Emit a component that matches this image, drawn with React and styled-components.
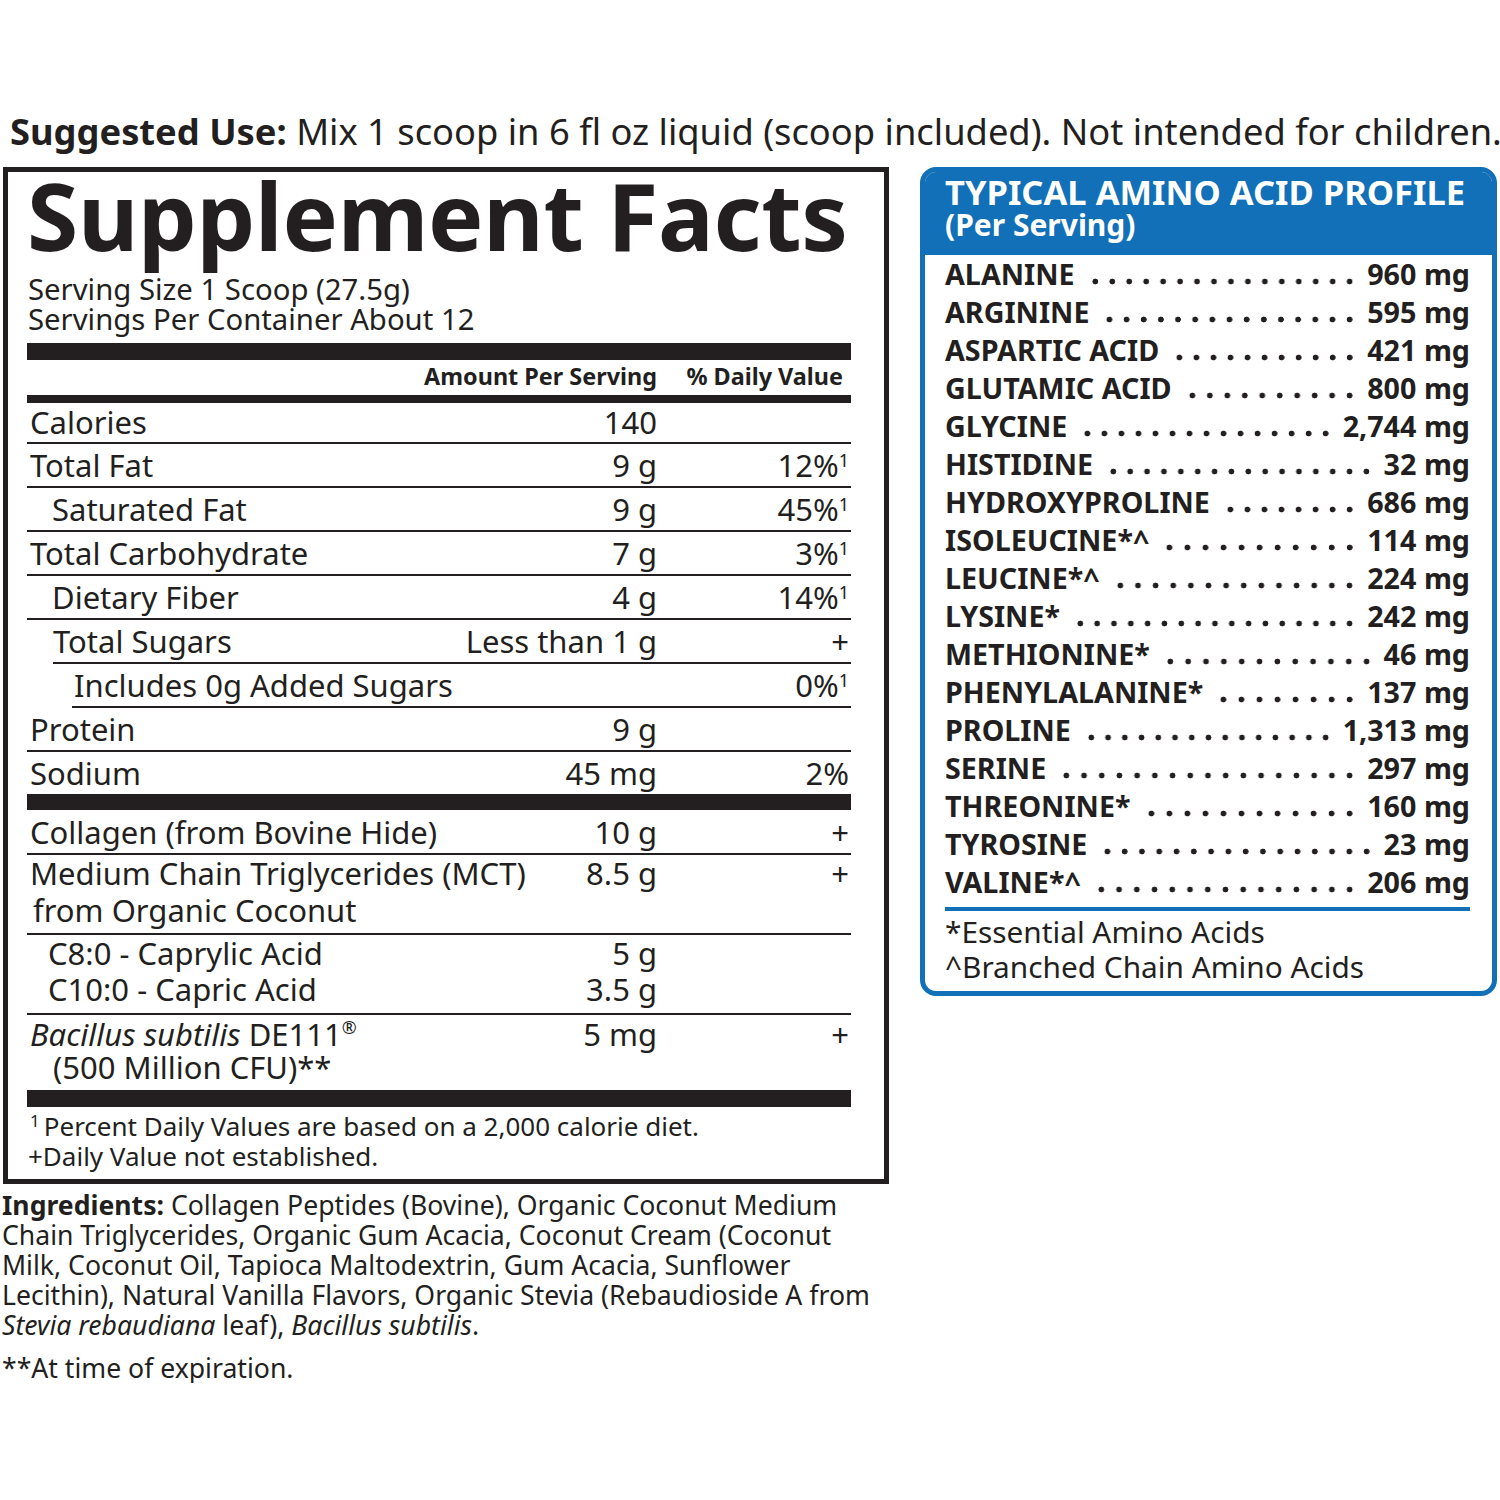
import React from "react";
import styled, { createGlobalStyle } from "styled-components";

const ink = "#231f20";
const blue = "#1170b8";

const GlobalStyle = createGlobalStyle`
  html, body { margin: 0; padding: 0; background: #fff; }
  body {
    color: ${ink};
    font-family: "Noto Sans", "Open Sans", sans-serif;
  }
`;

const Page = styled.div`
  width: 1500px;
  padding-top: 108px;
`;

const Suggested = styled.div`
  padding-left: 10px;
  font-size: 36.3px;
  line-height: 46px;
  white-space: nowrap;
  b { font-weight: 700; }
`;

const Columns = styled.div`
  display: flex;
  align-items: flex-start;
  gap: 31px;
  margin-top: 13px;
  padding-left: 3px;
`;

const LeftCol = styled.div`
  width: 886px;
  display: flex;
  flex-direction: column;
`;

const FactsBox = styled.section`
  box-sizing: border-box;
  width: 886px;
  border: 5px solid ${ink};
  padding: 3px 33px 8px 19px;
`;

const Title = styled.h1`
  margin: 0;
  font-size: 93px;
  font-weight: 700;
  line-height: 80px;
  white-space: nowrap;
  letter-spacing: -0.3px;
`;

const Serving = styled.div`
  margin-top: 19px;
  font-size: 29.3px;
  line-height: 30px;
  padding-left: 1px;
  white-space: nowrap;
`;

const Bar = styled.div`
  height: ${(p) => p.$h}px;
  margin-top: ${(p) => p.$mt || 0}px;
  background: ${ink};
`;

const HeaderRow = styled.div`
  display: flex;
  font-size: 23.4px;
  font-weight: 700;
  line-height: 33px;
  padding-bottom: 2px;
  white-space: nowrap;
`;

const Row = styled.div`
  display: flex;
  align-items: flex-start;
  margin-left: ${(p) => p.$inset || 0}px;
  padding-top: ${(p) => p.$pt || 0}px;
  padding-bottom: ${(p) => p.$pb || 0}px;
  border-bottom: ${(p) => (p.$line ? `2px solid ${ink}` : "none")};
  font-size: 31px;
  line-height: ${(p) => p.$lh || 42}px;
  white-space: nowrap;
`;

const RowGroup = styled.div`
  padding-bottom: 6px;
  border-bottom: 2px solid ${ink};
`;

const Name = styled.div`
  flex: 1;
  padding-left: ${(p) => p.$indent ?? 3}px;
`;

const Cont = styled.span`
  display: block;
  padding-left: ${(p) => p.$indent || 0}px;
`;

const Amount = styled.div`
  text-align: right;
`;

const DV = styled.div`
  width: 194px;
  flex: none;
  text-align: right;
  padding-right: ${(p) => p.$pr ?? 2}px;
  box-sizing: border-box;
`;

const Sup = styled.sup`
  font-size: ${(p) => p.$size || 18}px;
  line-height: 0;
  vertical-align: ${(p) => p.$raise || 10}px;
  margin-left: ${(p) => p.$ml || 0}px;
  margin-right: ${(p) => p.$mr || 0}px;
`;

const Footnotes = styled.div`
  padding-top: 4px;
  font-size: 26px;
  line-height: 30px;
  white-space: nowrap;
`;

const FootLine = styled.div`
  padding-left: ${(p) => p.$indent || 1}px;
`;

const Ingredients = styled.p`
  margin: 6px 0 0 -1px;
  font-size: 26.6px;
  line-height: 30px;
  white-space: nowrap;
  b { font-weight: 700; }
`;

const Expiration = styled.p`
  margin: 13px 0 0 -1px;
  font-size: 26.6px;
  line-height: 30px;
`;

const AminoBox = styled.section`
  box-sizing: border-box;
  width: 577px;
  border: 5px solid ${blue};
  border-radius: 16px;
  overflow: hidden;
  background: #fff;
`;

const AminoHeader = styled.header`
  background: ${blue};
  color: #fff;
  padding: 2px 10px 15px 20px;
  font-weight: 700;
  white-space: nowrap;
`;

const AminoTitle = styled.div`
  font-size: 34.5px;
  line-height: 36px;
`;

const AminoSub = styled.div`
  font-size: 30px;
  line-height: 30px;
`;

const AminoList = styled.div`
  padding: 0 22px 7px 20px;
`;

const AminoRow = styled.div`
  display: flex;
  align-items: stretch;
  font-size: 28.7px;
  font-weight: 700;
  line-height: 38px;
  white-space: nowrap;
`;

const Dots = styled.span`
  flex: 1;
  margin: 0 9px 0 12px;
  background-image: radial-gradient(circle at 50% 26.5px, ${ink} 2.6px, transparent 3.2px);
  background-size: 16.7px 38px;
  background-repeat: space no-repeat;
  background-position: right top;
`;

const Rule = styled.div`
  height: 4px;
  margin-top: 6px;
  background: ${blue};
`;

const Notes = styled.div`
  padding-top: 3px;
  font-size: 29.8px;
  line-height: 35px;
  white-space: nowrap;
`;

const aminos = [
  ["ALANINE", "960 mg"],
  ["ARGININE", "595 mg"],
  ["ASPARTIC ACID", "421 mg"],
  ["GLUTAMIC ACID", "800 mg"],
  ["GLYCINE", "2,744 mg"],
  ["HISTIDINE", "32 mg"],
  ["HYDROXYPROLINE", "686 mg"],
  ["ISOLEUCINE*^", "114 mg"],
  ["LEUCINE*^", "224 mg"],
  ["LYSINE*", "242 mg"],
  ["METHIONINE*", "46 mg"],
  ["PHENYLALANINE*", "137 mg"],
  ["PROLINE", "1,313 mg"],
  ["SERINE", "297 mg"],
  ["THREONINE*", "160 mg"],
  ["TYROSINE", "23 mg"],
  ["VALINE*^", "206 mg"],
];

const One = () => <Sup>1</Sup>;

export default function App() {
  return (
    <Page>
      <GlobalStyle />
      <Suggested>
        <b>Suggested Use:</b> Mix 1 scoop in 6 fl oz liquid (scoop included). Not intended for children.
      </Suggested>
      <Columns>
        <LeftCol>
          <FactsBox>
            <Title>Supplement Facts</Title>
            <Serving>
              Serving Size 1 Scoop (27.5g)
              <br />
              Servings Per Container About 12
            </Serving>
            <Bar $h={17} $mt={9} />
            <HeaderRow>
              <Name />
              <Amount>Amount Per Serving</Amount>
              <DV $pr={8}>% Daily Value</DV>
            </HeaderRow>
            <Bar $h={8} />
            <Row $line $lh={39}>
              <Name>Calories</Name>
              <Amount>140</Amount>
              <DV />
            </Row>
            <Row $line>
              <Name>Total Fat</Name>
              <Amount>9 g</Amount>
              <DV>12%<One /></DV>
            </Row>
            <Row $line>
              <Name $indent={25}>Saturated Fat</Name>
              <Amount>9 g</Amount>
              <DV>45%<One /></DV>
            </Row>
            <Row $line>
              <Name>Total Carbohydrate</Name>
              <Amount>7 g</Amount>
              <DV>3%<One /></DV>
            </Row>
            <Row $line>
              <Name $indent={25}>Dietary Fiber</Name>
              <Amount>4 g</Amount>
              <DV>14%<One /></DV>
            </Row>
            <Row $line $inset={26}>
              <Name $indent={0}>Total Sugars</Name>
              <Amount>Less than 1 g</Amount>
              <DV>+</DV>
            </Row>
            <Row $line $inset={45}>
              <Name $indent={2}>Includes 0g Added Sugars</Name>
              <Amount />
              <DV>0%<One /></DV>
            </Row>
            <Row $line>
              <Name>Protein</Name>
              <Amount>9 g</Amount>
              <DV />
            </Row>
            <Row>
              <Name>Sodium</Name>
              <Amount>45 mg</Amount>
              <DV>2%</DV>
            </Row>
            <Bar $h={16} />
            <Row $line $pt={1}>
              <Name>Collagen (from Bovine Hide)</Name>
              <Amount>10 g</Amount>
              <DV>+</DV>
            </Row>
            <Row $line $lh={37} $pb={4}>
              <Name>
                Medium Chain Triglycerides (MCT)
                <Cont $indent={3}>from Organic Coconut</Cont>
              </Name>
              <Amount>8.5 g</Amount>
              <DV>+</DV>
            </Row>
            <RowGroup>
              <Row $lh={36}>
                <Name $indent={21}>C8:0 - Caprylic Acid</Name>
                <Amount>5 g</Amount>
                <DV />
              </Row>
              <Row $lh={36}>
                <Name $indent={21}>C10:0 - Capric Acid</Name>
                <Amount>3.5 g</Amount>
                <DV />
              </Row>
            </RowGroup>
            <Row $lh={33} $pt={3} $pb={6}>
              <Name>
                <i>Bacillus subtilis</i> DE111<Sup $size={18} $raise={12}>®</Sup>
                <Cont $indent={23}>(500 Million CFU)**</Cont>
              </Name>
              <Amount>5 mg</Amount>
              <DV>+</DV>
            </Row>
            <Bar $h={17} />
            <Footnotes>
              <FootLine $indent={3}>
                <Sup $size={17} $raise={9} $mr={4}>1</Sup>Percent Daily Values are based on a 2,000 calorie diet.
              </FootLine>
              <FootLine>+Daily Value not established.</FootLine>
            </Footnotes>
          </FactsBox>
          <Ingredients>
            <b>Ingredients:</b> Collagen Peptides (Bovine), Organic Coconut Medium
            <br />
            Chain Triglycerides, Organic Gum Acacia, Coconut Cream (Coconut
            <br />
            Milk, Coconut Oil, Tapioca Maltodextrin, Gum Acacia, Sunflower
            <br />
            Lecithin), Natural Vanilla Flavors, Organic Stevia (Rebaudioside A from
            <br />
            <i>Stevia rebaudiana</i> leaf), <i>Bacillus subtilis</i>.
          </Ingredients>
          <Expiration>**At time of expiration.</Expiration>
        </LeftCol>
        <AminoBox>
          <AminoHeader>
            <AminoTitle>TYPICAL AMINO ACID PROFILE</AminoTitle>
            <AminoSub>(Per Serving)</AminoSub>
          </AminoHeader>
          <AminoList>
            {aminos.map(([n, v]) => (
              <AminoRow key={n}>
                <span>{n}</span>
                <Dots />
                <span>{v}</span>
              </AminoRow>
            ))}
            <Rule />
            <Notes>
              *Essential Amino Acids
              <br />
              ^Branched Chain Amino Acids
            </Notes>
          </AminoList>
        </AminoBox>
      </Columns>
    </Page>
  );
}
